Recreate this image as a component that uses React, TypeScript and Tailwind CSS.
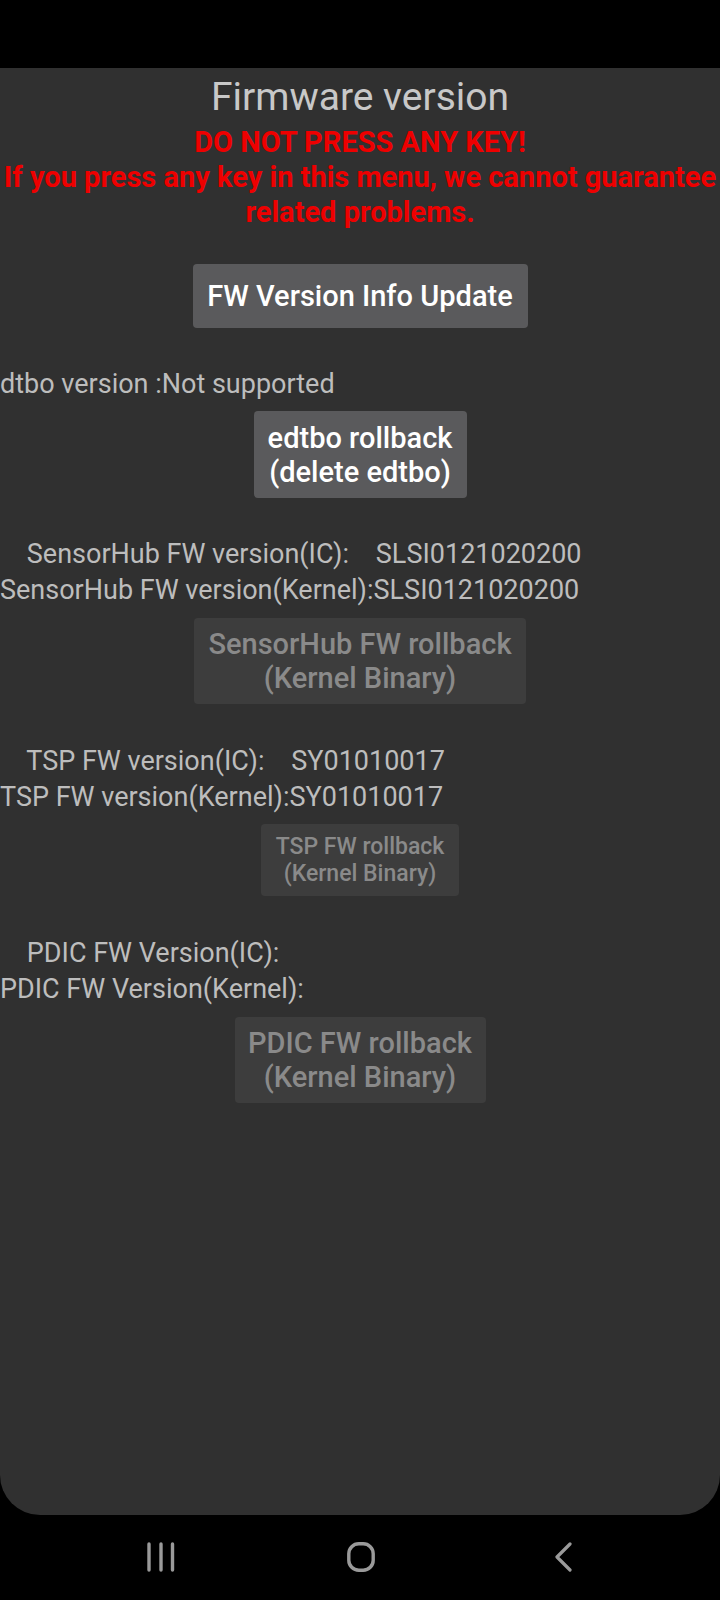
import React from 'react'

const font = "font-['Roboto','Noto_Sans',sans-serif]"

function InfoLines({ lines }: { lines: string[] }) {
  return (
    <div className="self-start whitespace-pre text-[27px] leading-[36px] text-[#bdbdbd]">
      {lines.map((line) => (
        <div key={line}>{line}</div>
      ))}
    </div>
  )
}

function ActionButton({
  lines,
  disabled,
  className,
}: {
  lines: string[]
  disabled?: boolean
  className: string
}) {
  return (
    <button
      disabled={disabled}
      className={
        'mx-auto flex flex-col items-center justify-center rounded-[4px] font-medium ' +
        (disabled ? 'bg-[#3d3d3d] text-[#8a8a8a] ' : 'bg-[#5a5a5c] text-white ') +
        className
      }
    >
      {lines.map((line) => (
        <span key={line}>{line}</span>
      ))}
    </button>
  )
}

function NavBar() {
  return (
    <div className="flex flex-1 items-center bg-black pb-[2px] pl-[146px]">
      <svg width="30" height="30" viewBox="0 0 30 30" className="shrink-0">
        <g stroke="#9a9a9a" strokeWidth="3.4" strokeLinecap="round">
          <line x1="3" y1="2" x2="3" y2="28" />
          <line x1="15" y1="2" x2="15" y2="28" />
          <line x1="26.5" y1="2" x2="26.5" y2="28" />
        </g>
      </svg>
      <svg width="28" height="30" viewBox="0 0 28 30" className="ml-[171px] shrink-0">
        <rect
          x="1.8"
          y="1.8"
          width="24.4"
          height="26.4"
          rx="10"
          fill="none"
          stroke="#9a9a9a"
          strokeWidth="3.4"
        />
      </svg>
      <svg width="20" height="30" viewBox="0 0 20 30" className="ml-[179px] shrink-0">
        <polyline
          points="16,2 3,15 16,28"
          fill="none"
          stroke="#9a9a9a"
          strokeWidth="3.2"
          strokeLinecap="round"
          strokeLinejoin="round"
        />
      </svg>
    </div>
  )
}

export default function App() {
  return (
    <div className={'flex h-[1600px] w-[720px] flex-col bg-black ' + font}>
      <div className="h-[68px] shrink-0 bg-black" />

      <div className="flex h-[1447px] shrink-0 flex-col rounded-b-[40px] bg-[#303030]">
        <h1 className="pt-[7px] text-center text-[39px] leading-[44px] text-[#c8c8c8]">
          Firmware version
        </h1>

        <div className="mt-[6px] text-center text-[29px] font-bold leading-[35px] text-[#ee0000]">
          <p>DO NOT PRESS ANY KEY!</p>
          <p>If you press any key in this menu, we cannot guarantee related problems.</p>
        </div>

        <div className="mt-[34px] flex flex-col">
          <ActionButton
            lines={['FW Version Info Update']}
            className="h-[64px] w-[335px] text-[29px] leading-[34px]"
          />
        </div>

        <div className="mt-[38px] flex flex-col">
          <InfoLines lines={['dtbo version :Not supported']} />
          <ActionButton
            lines={['edtbo rollback', '(delete edtbo)']}
            className="mt-[9px] h-[87px] w-[213px] text-[29px] leading-[34px]"
          />
        </div>

        <div className="mt-[38px] flex flex-col">
          <InfoLines
            lines={['    SensorHub FW version(IC):    SLSI0121020200', 'SensorHub FW version(Kernel):SLSI0121020200']}
          />
          <ActionButton
            disabled
            lines={['SensorHub FW rollback', '(Kernel Binary)']}
            className="mt-[10px] h-[86px] w-[332px] text-[29px] leading-[34px]"
          />
        </div>

        <div className="mt-[39px] flex flex-col">
          <InfoLines lines={['    TSP FW version(IC):    SY01010017', 'TSP FW version(Kernel):SY01010017']} />
          <ActionButton
            disabled
            lines={['TSP FW rollback', '(Kernel Binary)']}
            className="mt-[9px] h-[72px] w-[198px] text-[23px] leading-[27px]"
          />
        </div>

        <div className="mt-[39px] flex flex-col">
          <InfoLines lines={['    PDIC FW Version(IC):', 'PDIC FW Version(Kernel):']} />
          <ActionButton
            disabled
            lines={['PDIC FW rollback', '(Kernel Binary)']}
            className="mt-[10px] h-[86px] w-[251px] text-[29px] leading-[34px]"
          />
        </div>
      </div>

      <NavBar />
    </div>
  )
}
